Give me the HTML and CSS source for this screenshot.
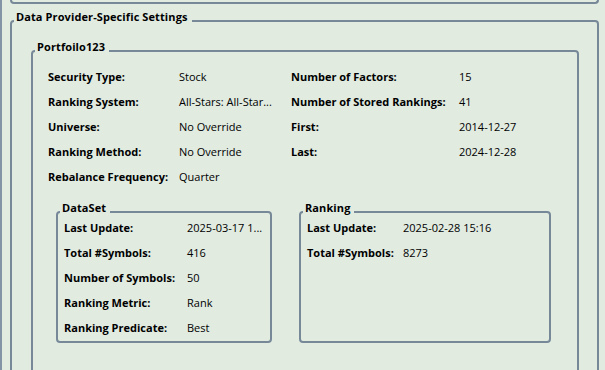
FILE: index.html
```html
<!DOCTYPE html>
<html>
<head>
<meta charset="utf-8">
<link rel="stylesheet" href="styles.css">
</head>
<body>
<div class="window">
  <div class="topbox"></div>
  <fieldset class="group outer">
    <legend>Data Provider-Specific Settings</legend>
    <fieldset class="group provider">
      <legend>Portfoilo123</legend>
      <div class="summary">
        <span class="lbl">Security Type:</span><span class="val">Stock</span>
        <span class="lbl">Number of Factors:</span><span class="val">15</span>
        <span class="lbl">Ranking System:</span><span class="val">All-Stars: All-Star...</span>
        <span class="lbl">Number of Stored Rankings:</span><span class="val">41</span>
        <span class="lbl">Universe:</span><span class="val">No Override</span>
        <span class="lbl">First:</span><span class="val">2014-12-27</span>
        <span class="lbl">Ranking Method:</span><span class="val">No Override</span>
        <span class="lbl">Last:</span><span class="val">2024-12-28</span>
        <span class="lbl">Rebalance Frequency:</span><span class="val">Quarter</span>
      </div>
      <div class="subgroups">
        <fieldset class="group dataset">
          <legend>DataSet</legend>
          <div class="pairs ds">
            <span class="lbl">Last Update:</span><span class="val">2025-03-17 1...</span>
            <span class="lbl">Total #Symbols:</span><span class="val">416</span>
            <span class="lbl">Number of Symbols:</span><span class="val">50</span>
            <span class="lbl">Ranking Metric:</span><span class="val">Rank</span>
            <span class="lbl">Ranking Predicate:</span><span class="val">Best</span>
          </div>
        </fieldset>
        <fieldset class="group ranking">
          <legend>Ranking</legend>
          <div class="pairs rk">
            <span class="lbl">Last Update:</span><span class="val">2025-02-28 15:16</span>
            <span class="lbl">Total #Symbols:</span><span class="val">8273</span>
          </div>
        </fieldset>
      </div>
    </fieldset>
  </fieldset>
</div>
</body>
</html>
```
FILE: styles.css
```css
html, body {
  margin: 0;
  padding: 0;
  height: 100%;
  overflow: hidden;
  background: #e1ebe0;
}
body {
  font-family: "Open Sans", "Noto Sans", sans-serif;
  font-size: 11px;
  line-height: 16px;
  color: #000;
}
.window {
  border-left: 2px solid #8294a6;
  padding: 0 6px 0 8px;
  height: 100%;
}
.topbox {
  height: 2px;
  border: 2px solid #778899;
  border-top: none;
  border-radius: 0 0 4px 4px;
}
.group {
  margin: 0;
  padding: 0;
  min-width: 0;
  border: 2px solid #778899;
  border-radius: 4px;
}
.group > legend {
  margin-left: 2px;
  padding: 0 4px 0 2px;
  line-height: 16px;
  font-weight: 700;
  letter-spacing: 0.1px;
  position: relative;
  top: -4px;
}
.outer {
  margin-top: 9px;
  height: 420px;
}
.provider {
  margin: 14px 18px 0 19px;
  height: 400px;
}
.summary {
  display: grid;
  grid-template-columns: 131px 112px 168px auto;
  row-gap: 9px;
  padding: 10px 0 0 15px;
}
.lbl {
  font-weight: 700;
  white-space: nowrap;
}
.val {
  white-space: nowrap;
}
.subgroups {
  display: flex;
  gap: 27px;
  margin: 19px 0 0 23px;
  align-items: flex-start;
}
.dataset {
  width: 216px;
  box-sizing: border-box;
  height: 139px;
}
.ranking {
  width: 252px;
  box-sizing: border-box;
  height: 139px;
}
.pairs {
  display: grid;
  row-gap: 9px;
  padding: 0 0 0 6px;
}
.ds {
  grid-template-columns: 123px auto;
}
.rk {
  grid-template-columns: 96px auto;
}
```
